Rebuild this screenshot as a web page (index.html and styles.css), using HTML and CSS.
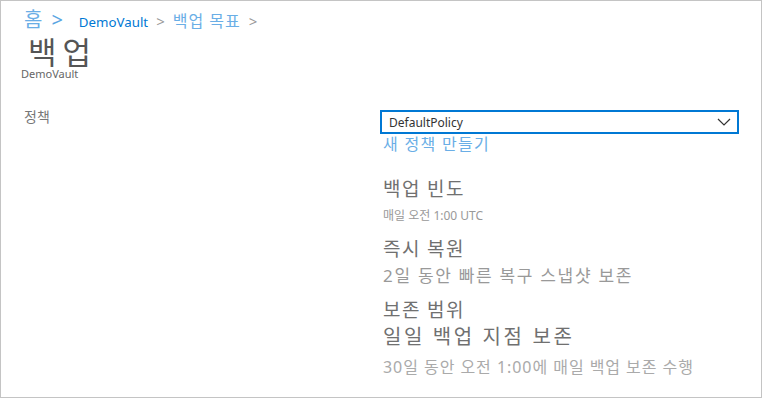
FILE: index.html
```html
<!DOCTYPE html>
<html lang="ko">
<head>
    <meta charset="UTF-8">
    <title>백업</title>
    <link rel="stylesheet" href="styles.css">
</head>
<body>
    <div class="frame">
        <div class="breadcrumb">
            <span class="crumb-home">홈</span>
            <span class="sep-blue">&gt;</span>
            <span class="crumb-link">DemoVault</span>
            <span class="sep">&gt;</span>
            <span class="crumb-ko">백업 목표</span>
            <span class="sep">&gt;</span>
        </div>
        <h1 class="title">백업</h1>
        <div class="subtitle">DemoVault</div>

        <div class="form-row">
            <div class="label">정책</div>
            <div class="field">
                <div class="select">
                    <span>DefaultPolicy</span>
                    <svg width="14" height="8" viewBox="0 0 14 8"><path d="M1 1 L7 7 L13 1" fill="none" stroke="#333" stroke-width="1.2"/></svg>
                </div>
                <a class="new-policy" href="#">새 정책 만들기</a>

                <div class="details">
                    <div class="head">백업 빈도</div>
                    <div class="small">매일 오전 1:00 UTC</div>
                    <div class="head restore">즉시 복원</div>
                    <div class="mid">2일 동안 빠른 복구 스냅샷 보존</div>
                    <div class="head range">보존 범위</div>
                    <div class="head big">일일 백업 지점 보존</div>
                    <div class="mid light">30일 동안 오전 1:00에 매일 백업 보존 수행</div>
                </div>
            </div>
        </div>
    </div>
</body>
</html>
```

FILE: styles.css
```css
body {
    margin: 0;
    font-family: "Noto Sans", "Noto Sans CJK KR", sans-serif;
    background: #fff;
}
.frame {
    width: 762px;
    height: 398px;
    box-sizing: border-box;
    border: 1px solid #c4c4c4;
    padding: 0 22px 0 20px;
}
.breadcrumb {
    display: flex;
    align-items: baseline;
    padding: 6px 0 0 3px;
    height: 30px;
    line-height: 26px;
    box-sizing: border-box;
}
.crumb-home {
    font-size: 20px;
    color: #6aaee6;
}
.sep-blue {
    color: #5aa5e2;
    font-size: 20px;
    margin: 0 16px 0 9px;
}
.crumb-link {
    font-size: 13.3px;
    color: #0078d4;
}
.sep {
    color: #999;
    font-size: 15px;
    margin: 0 8px;
}
.crumb-ko {
    font-size: 16px;
    color: #6aaee6;
    letter-spacing: 1px;
}
.title {
    margin: 6px 0 0 7px;
    font-size: 31px;
    font-weight: normal;
    color: #555;
    line-height: 31px;
    letter-spacing: 6px;
}
.subtitle {
    font-size: 11px;
    color: #666;
    line-height: 12px;
}
.form-row {
    display: flex;
    margin-top: 30px;
}
.label {
    width: 356px;
    padding: 0 0 0 3px;
    font-size: 14px;
    line-height: 13px;
    color: #777;
}
.field {
    flex: 1;
}
.select {
    height: 24px;
    box-sizing: border-box;
    border: 2px solid #0078d4;
    display: flex;
    align-items: center;
    justify-content: space-between;
    padding: 0 6px 0 7px;
    font-size: 12px;
    color: #333;
}
.new-policy {
    display: block;
    margin: 0 0 0 3px;
    font-size: 16px;
    line-height: 20px;
    color: #6aaee6;
    text-decoration: none;
    letter-spacing: 1.3px;
}
.details {
    margin-top: 22px;
    padding-left: 3px;
}
.head {
    font-size: 19px;
    line-height: 27px;
    color: #707070;
    letter-spacing: 1.4px;
}
.head.restore {
    margin-top: 5px;
}
.head.range {
    margin-top: 8px;
}
.head.big {
    margin-top: -2px;
    font-size: 20px;
    line-height: 30px;
    letter-spacing: 2.6px;
}
.small {
    margin-top: -2px;
    font-size: 12px;
    color: #999;
    line-height: 30px;
}
.mid {
    font-size: 17px;
    color: #999;
    line-height: 26px;
    letter-spacing: 1.7px;
}
.mid.light {
    margin-top: 2px;
    font-size: 16px;
    color: #aaa;
    letter-spacing: 0.95px;
}
```
